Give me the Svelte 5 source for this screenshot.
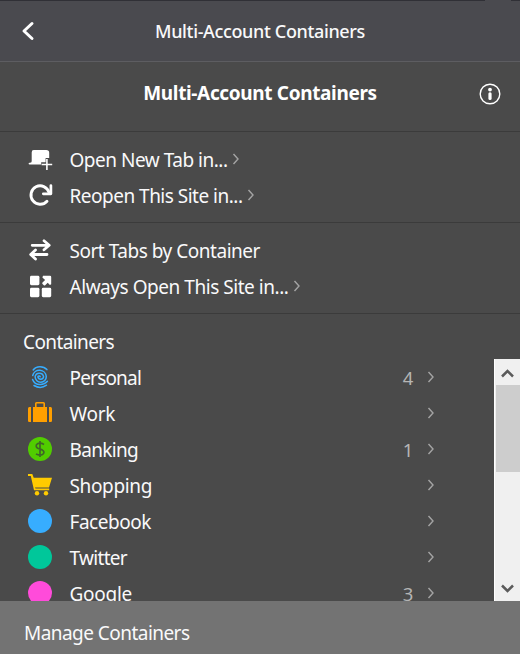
<script>
  // Adjusts letter spacing so that a label takes up its intended width.
  function fit(node, width) {
    node.style.letterSpacing = '0px';
    const natural = node.getBoundingClientRect().width;
    const count = node.textContent.length;
    node.style.letterSpacing = `${(width - natural) / count}px`;
  }

  const groups = [
    [
      { icon: 'newtab', label: 'Open New Tab in...', width: 158, more: true },
      { icon: 'reload', label: 'Reopen This Site in...', width: 173, more: true }
    ],
    [
      { icon: 'sort', label: 'Sort Tabs by Container', width: 190.5, more: false },
      { icon: 'always', label: 'Always Open This Site in...', width: 219, more: true }
    ]
  ];

  const containers = [
    { icon: 'fingerprint', name: 'Personal', width: 71.5, count: 4 },
    { icon: 'briefcase', name: 'Work', width: 45.5 },
    { icon: 'dollar', name: 'Banking', width: 68.5, count: 1 },
    { icon: 'cart', name: 'Shopping', width: 82.5 },
    { icon: 'circle', color: '#37adff', name: 'Facebook', width: 81.5 },
    { icon: 'circle', color: '#00c79a', name: 'Twitter', width: 57.5 },
    { icon: 'circle', color: '#ff4bda', name: 'Google', width: 62.5, count: 3 }
  ];
</script>

{#snippet chevron()}
  <svg class="chevron" width="8" height="12" viewBox="0 0 8 12"><path d="M1.5 1 6 6 1.5 11" fill="none" stroke="#a4a4a4" stroke-width="1.4" /></svg>
{/snippet}

{#snippet icon(name, color)}
  <svg class="icon" width="24" height="24" viewBox="0 0 24 24" fill="#fff">
    {#if name === 'newtab'}
      <path d="M5.8 3h12.4q3 0 3 2.8V11h-3.6v4.3h-4.4v2.2H1.6q-1 0-1-.9t1.1-.9q2 0 2-1.5V5.4Q3.6 3 5.8 3Z" />
      <path d="M18.9 12v11M13.6 17.5h10.6" fill="none" stroke="#fff" stroke-width="1.6" />
    {:else if name === 'reload'}
      <path d="M19 18.2A9.2 9.2 0 1 1 21 9.4" fill="none" stroke="#fff" stroke-width="2.9" stroke-linecap="round" />
      <path d="M22.9 2.6v8.2h-7.6" fill="none" stroke="#fff" stroke-width="2.7" stroke-linecap="round" stroke-linejoin="round" />
    {:else if name === 'sort'}
      <path d="M4.2 7.3H20M16 2.8l5.2 4.5L16 11.8M19 16.5H3.7M7.5 12l-4.8 4.5 4.8 4.5" fill="none" stroke="#fff" stroke-width="2.8" stroke-linecap="round" stroke-linejoin="round" />
    {:else if name === 'always'}
      <rect x="2" y="1.8" width="9.4" height="9.4" rx="1.4" />
      <rect x="2" y="13.8" width="9.4" height="9.4" rx="1.4" />
      <rect x="13.8" y="13.8" width="9.4" height="9.4" rx="1.4" />
      <path d="M15 1.8h7q1.2 0 1.2 1.2v7.2l-1.3.9-2.2-2.3-2.5 2.5q-.7.6-1.4 0l-1.3-1.3q-.6-.7 0-1.4l2.6-2.5L14.4 3.6Z" />
    {:else if name === 'fingerprint'}
      <g fill="none" stroke="#37adff" stroke-width="1.5" stroke-linecap="round">
        <path d="M5.2 5C8.200 .6 15.500 .6 18.900 4.600" />
        <path d="M12.200 11.800A1.200 1.200 0 0 0 9.900 11.800A2.900 2.900 0 0 0 15.600 11.800A4.300 4.300 0 0 0 7.100 11.800A5.500 5.500 0 0 0 18.300 11.500A6.900 6.900 0 0 0 4.700 10.500" />
        <path d="M4.600 14.500Q6.500 19.800 12.500 19.600Q16.700 19.500 19.400 16.300M6 20.500Q12.500 24.500 18.500 20.200" />
      </g>
    {:else if name === 'briefcase'}
      <g fill="#ff9f00">
        <path d="M0 7.7Q0 6 1.3 6H3v15H1.3Q0 21 0 19.7ZM21 6h1.7Q24 6 24 7.7v12Q24 21 22.7 21H21Z" />
        <path d="M5 6h2V2.5Q7 1 8.5 1h7Q17 1 17 2.5V6h2v15H5ZM8.6 2.6V6h6.8V2.6Z" fill-rule="evenodd" />
      </g>
    {:else if name === 'dollar'}
      <circle cx="12" cy="12" r="12" fill="#51cd00" />
      <path d="M16 7.4Q12.2 5.2 9.5 6.8c-2 1.2-1.6 3.6.3 4.5l4.4 1.6c2.2 1 2.3 3.5.3 4.6-1.9 1-4.5.6-6.5-.4M12 4v16" fill="none" stroke="#3f6528" stroke-width="1.7" />
    {:else if name === 'cart'}
      <g fill="#ffcb00">
        <path d="M0 1h4.3l1.4 3.7H24l-3 9.7H7l.5 1.2h13.7v1.7H6L2.8 3H0Z" />
        <circle cx="9" cy="20.3" r="2.2" /><circle cx="18" cy="20.3" r="2.2" />
      </g>
    {:else}
      <circle cx="12" cy="12" r="12" fill={color} />
    {/if}
  </svg>
{/snippet}

<main class="panel">
  <header class="bar">
    <span class="notch"></span>
    <svg class="back" width="14" height="20" viewBox="0 0 14 20"><path d="M11 2.5 3 10l8 7.5" fill="none" stroke="#fff" stroke-width="3" stroke-linecap="round" stroke-linejoin="round" /></svg>
    <span class="bar-title"><span use:fit={210}>Multi-Account Containers</span></span>
  </header>
  <div class="title-row">
    <h1><span use:fit={233.5}>Multi-Account Containers</span></h1>
    <svg class="info" width="22" height="22" viewBox="0 0 22 22"><circle cx="11" cy="11" r="9.8" fill="none" stroke="#fff" stroke-width="1.4" /><circle cx="11" cy="6.6" r="1.9" fill="#fff" /><rect x="9.4" y="9.3" width="3.2" height="7.7" rx="1.5" fill="#fff" /></svg>
  </div>
  {#each groups as group}
    <section class="group">
      {#each group as item}
        <div class="row">
          {@render icon(item.icon)}
          <span class="label" use:fit={item.width}>{item.label}</span>
          {#if item.more}{@render chevron()}{/if}
        </div>
      {/each}
    </section>
  {/each}
  <h2><span use:fit={91}>Containers</span></h2>
  <div class="scroller">
    <div class="list">
      {#each containers as item}
        <div class="row">
          {@render icon(item.icon, item.color)}
          <span class="label" use:fit={item.width}>{item.name}</span>
          <span class="count">{item.count ?? ''}</span>
          {@render chevron()}
        </div>
      {/each}
    </div>
    <div class="scrollbar">
      <svg width="13" height="9" viewBox="0 0 13 9"><path d="M1 7.5 6.5 2 12 7.5" fill="none" stroke="#5b5b5b" stroke-width="2.5" /></svg>
      <div class="thumb"></div>
      <svg class="down" width="13" height="9" viewBox="0 0 13 9"><path d="M1 1.5 6.5 7 12 1.5" fill="none" stroke="#5b5b5b" stroke-width="2.5" /></svg>
    </div>
  </div>
  <footer><span use:fit={165.5}>Manage Containers</span></footer>
</main>

<style>
  .panel {
    box-sizing: border-box;
    width: 520px;
    height: 654px;
    display: flex;
    flex-direction: column;
    overflow: hidden;
    background: #4a4a4a;
    color: #f9f9fa;
    font: 19px/36px "Noto Sans", "Open Sans", sans-serif;
    white-space: nowrap;
  }
  svg { display: block; flex: none; }
  .bar {
    position: relative;
    box-sizing: border-box;
    height: 62px;
    flex: none;
    display: flex;
    align-items: center;
    padding: 0 22px 0 21px;
    border-top: 1px solid #303036;
    border-bottom: 1px solid #5d5d61;
    background: #4a4a4f;
  }
  .notch { position: absolute; top: -1px; right: 9px; width: 26px; height: 1px; background: #4a4a4f; }
  .bar-title { flex: 1; text-align: center; font-size: 18px; font-weight: 500; margin-right: 13px; }
  .title-row {
    box-sizing: border-box;
    height: 70px;
    flex: none;
    display: flex;
    align-items: center;
    padding: 0 19px 8px 0;
    border-bottom: 1px solid #3b3b3b;
  }
  h1 { flex: 1; margin: 0 0 0 41px; text-align: center; font-size: 19px; font-weight: 700; line-height: 36px; color: #fff; }
  .info { margin-top: 2px; }
  .group {
    box-sizing: border-box;
    height: 91px;
    flex: none;
    padding-top: 10px;
    border-bottom: 1px solid #3b3b3b;
  }
  .row { height: 36px; display: flex; align-items: center; padding-left: 28px; }
  .icon { margin-right: 17.5px; margin-top: -2px; overflow: visible; }
  .group .icon { margin-top: -2px; }
  .chevron { margin-left: 4.5px; margin-top: -3px; }
  h2 { flex: none; height: 45px; box-sizing: border-box; margin: 0; padding: 10px 0 0 23px; font-size: 19px; font-weight: 400; line-height: 36px; }
  .scroller { flex: 1; min-height: 0; display: flex; overflow: hidden; }
  .list { flex: 1; }
  .list .row { position: relative; top: 1px; padding-right: 60px; }
  .count { margin-left: auto; width: 20px; text-align: center; color: #b5b5b5; font-size: 18.5px; }
  .list .chevron { margin-left: 9px; margin-right: -1px; }
  .scrollbar {
    box-sizing: border-box;
    width: 26px;
    display: flex;
    flex-direction: column;
    align-items: center;
    padding: 10px 0 8px;
    background: #f0f0f0;
    border-left: 1px solid #fff;
  }
  .thumb { width: 24px; height: 87px; margin-top: 7px; background: #cdcdcd; }
  .down { margin-top: auto; }
  footer { flex: none; box-sizing: border-box; height: 53px; padding: 14px 0 0 24px; background: #737373; }
</style>
